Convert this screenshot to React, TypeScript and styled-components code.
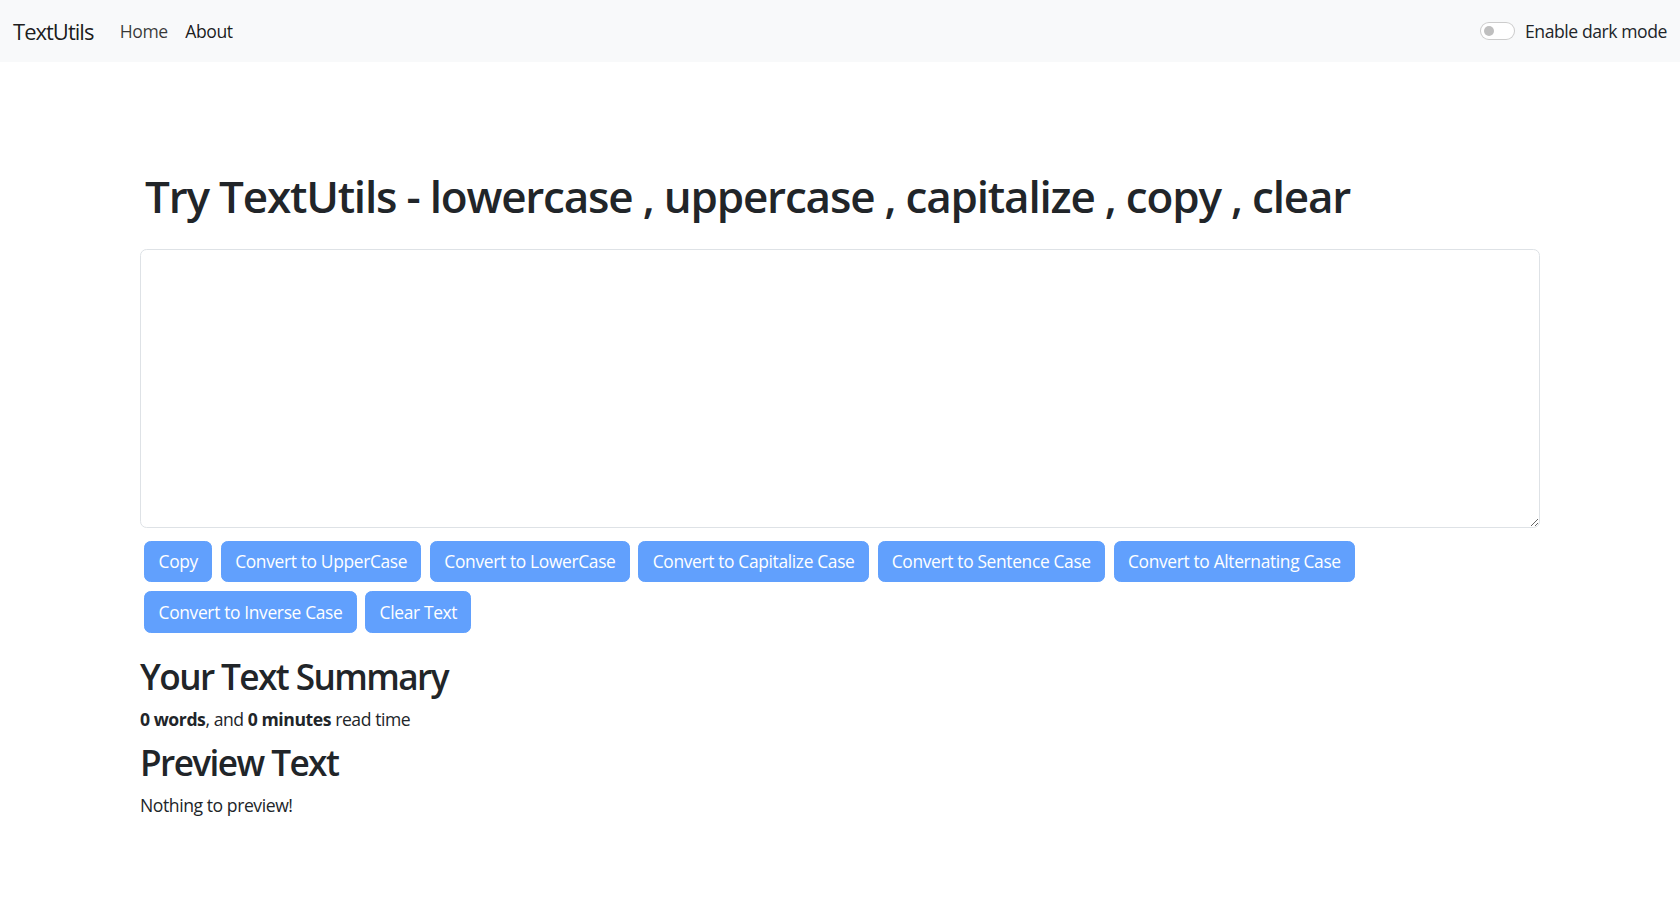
import React, { useState } from 'react';
import styled, { createGlobalStyle } from 'styled-components';

const GlobalStyle = createGlobalStyle`
  *, *::before, *::after {
    box-sizing: border-box;
  }
  body {
    margin: 0;
    background: #fff;
    color: #212529;
    font-family: 'Open Sans', 'Noto Sans', sans-serif;
    font-size: 17.6px;
    line-height: 1.5;
    letter-spacing: -0.025em;
  }
`;

const Navbar = styled.nav`
  height: 62px;
  background: #f8f9fa;
  display: flex;
  align-items: center;
  padding: 0 13px;
`;

const Brand = styled.a`
  font-size: 22px;
  color: rgba(0, 0, 0, 0.9);
  text-decoration: none;
  margin-right: 17.6px;
  line-height: 1.5;
  letter-spacing: -0.045em;
`;

const NavList = styled.ul`
  display: flex;
  list-style: none;
  margin: 0;
  padding: 0;
  flex: 1;
`;

const NavLink = styled.a<{ $active?: boolean }>`
  display: block;
  padding: 8.8px;
  color: ${(p) => (p.$active ? 'rgba(0, 0, 0, 0.78)' : 'rgba(0, 0, 0, 0.9)')};
  text-decoration: none;
`;

const SwitchLabel = styled.label`
  display: flex;
  align-items: center;
  gap: 10px;
  color: #212529;
  cursor: pointer;
`;

const SwitchTrack = styled.span<{ $on: boolean }>`
  position: relative;
  width: 35px;
  height: 17.6px;
  border-radius: 9px;
  border: 1px solid ${(p) => (p.$on ? '#0d6efd' : 'rgba(0, 0, 0, 0.2)')};
  background: ${(p) => (p.$on ? '#0d6efd' : '#fff')};

  &::after {
    content: '';
    position: absolute;
    top: 2.5px;
    left: ${(p) => (p.$on ? '19px' : '3px')};
    width: 10.5px;
    height: 10.5px;
    border-radius: 50%;
    background: ${(p) => (p.$on ? '#fff' : '#bfbfbf')};
  }
`;

const Main = styled.main`
  width: 1400px;
  margin: 0 auto;
  padding-top: 108px;
`;

const Heading = styled.h1`
  font-size: 44px;
  font-weight: 600;
  line-height: 1.2;
  margin: 0 0 26px;
  padding-left: 5px;
  letter-spacing: -0.027em;
`;

const TextBox = styled.textarea`
  display: block;
  width: 100%;
  height: 279px;
  padding: 6.6px 13.2px;
  border: 1.1px solid #dee2e6;
  border-radius: 6.6px;
  font: inherit;
  color: #212529;
  resize: vertical;
  outline: none;
`;

const ButtonWrap = styled.div`
  display: flex;
  flex-wrap: wrap;
  margin-top: 8.6px;
`;

const ActionButton = styled.button`
  margin: 4.4px;
  padding: 6.6px 13.2px;
  font-family: inherit;
  font-size: 17.4px;
  line-height: 26.4px;
  letter-spacing: -0.02em;
  color: #fff;
  background: #0d6efd;
  border: 1.1px solid #0d6efd;
  border-radius: 6.6px;
  cursor: pointer;

  &:disabled {
    opacity: 0.65;
    cursor: default;
  }
`;

const SubHeading = styled.h2`
  font-size: 35.2px;
  font-weight: 600;
  line-height: 1.2;
  margin: 0 0 8.8px;
  letter-spacing: -0.045em;
`;

const Summary = styled.section`
  padding-top: 17.5px;
`;

const Para = styled.p`
  margin: 0 0 8.8px;
`;

const actions = [
  'Copy',
  'Convert to UpperCase',
  'Convert to LowerCase',
  'Convert to Capitalize Case',
  'Convert to Sentence Case',
  'Convert to Alternating Case',
  'Convert to Inverse Case',
  'Clear Text',
];

export default function App() {
  const [text, setText] = useState('');
  const [dark, setDark] = useState(false);

  const words = text.split(/\s+/).filter((w) => w.length > 0).length;

  return (
    <>
      <GlobalStyle />
      <Navbar>
        <Brand href="#">TextUtils</Brand>
        <NavList>
          <li>
            <NavLink href="#" $active>
              Home
            </NavLink>
          </li>
          <li>
            <NavLink href="#">About</NavLink>
          </li>
        </NavList>
        <SwitchLabel onClick={() => setDark(!dark)}>
          <SwitchTrack $on={dark} />
          Enable dark mode
        </SwitchLabel>
      </Navbar>
      <Main>
        <Heading>Try TextUtils - lowercase , uppercase , capitalize , copy , clear</Heading>
        <TextBox value={text} onChange={(e) => setText(e.target.value)} />
        <ButtonWrap>
          {actions.map((a) => (
            <ActionButton key={a} disabled={text.length === 0}>
              {a}
            </ActionButton>
          ))}
        </ButtonWrap>
        <Summary>
          <SubHeading>Your Text Summary</SubHeading>
          <Para>
            <b>{words} words</b>, and <b>{0.008 * words} minutes</b> read time
          </Para>
          <SubHeading>Preview Text</SubHeading>
          <Para>{text.length > 0 ? text : 'Nothing to preview!'}</Para>
        </Summary>
      </Main>
    </>
  );
}
